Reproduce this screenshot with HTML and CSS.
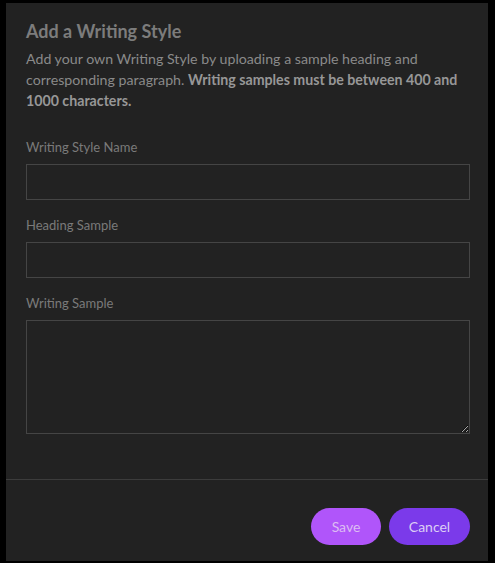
FILE: index.html
```html
<!DOCTYPE html>
<html>
<head>
<meta charset="utf-8">
<link rel="stylesheet" href="styles.css">
</head>
<body>
<div class="modal">
  <div class="modal-body">
    <h2 class="title">Add a Writing Style</h2>
    <p class="desc">Add your own Writing Style by uploading a sample heading and corresponding paragraph. <strong>Writing samples must be between 400 and 1000 characters.</strong></p>
    <div class="group">
      <label class="label">Writing Style Name</label>
      <input class="input" type="text">
    </div>
    <div class="group">
      <label class="label">Heading Sample</label>
      <input class="input" type="text">
    </div>
    <div class="group">
      <label class="label">Writing Sample</label>
      <textarea class="textarea"></textarea>
    </div>
  </div>
  <div class="modal-footer">
    <button class="btn btn-save">Save</button>
    <button class="btn btn-cancel">Cancel</button>
  </div>
</div>
</body>
</html>
```
FILE: styles.css
```css
html, body {
  margin: 0;
  padding: 0;
  background: #000;
}
body {
  font-family: Lato, "Noto Sans", sans-serif;
  padding: 3px 0 0 6px;
  height: 563px;
  box-sizing: border-box;
}
.modal {
  width: 482px;
  height: 558px;
  background: #222222;
  display: flex;
  flex-direction: column;
}
.modal-body {
  flex: 1;
  padding: 16px 18px 0 20px;
}
.title {
  margin: 0;
  font-size: 18px;
  line-height: 24px;
  font-weight: 700;
  color: #7c7c7c;
}
.desc {
  margin: 5px 0 0;
  font-size: 14.2px;
  line-height: 21px;
  color: #8a8a8a;
}
.desc strong {
  font-weight: 700;
  color: #979797;
}
.group {
  margin-top: 25px;
  display: flex;
  flex-direction: column;
}
.group + .group {
  margin-top: 14px;
}
.label {
  font-size: 13px;
  line-height: 18px;
  color: #7a7a7a;
  padding-top: 2px;
  margin-bottom: 8px;
}
.input, .textarea {
  box-sizing: border-box;
  width: 100%;
  background: transparent;
  border: 1px solid #454545;
  border-radius: 0;
  margin: 0;
  padding: 6px 10px;
  color: #ccc;
  font-family: inherit;
  font-size: 14px;
  outline: none;
}
.input {
  height: 36px;
}
.textarea {
  height: 114px;
  resize: vertical;
  display: block;
}
.modal-footer {
  border-top: 1px solid #3c3c3c;
  display: flex;
  justify-content: flex-end;
  gap: 8px;
  padding: 28px 18px 16px 20px;
}
.btn {
  height: 37px;
  border: none;
  border-radius: 19px;
  font-family: inherit;
  font-size: 14px;
  padding: 0;
  cursor: pointer;
}
.btn-save {
  width: 70px;
  background: #b055fa;
  color: #dcbcf3;
}
.btn-cancel {
  width: 81px;
  background: #7b3aea;
  color: #dccdf5;
}
```
